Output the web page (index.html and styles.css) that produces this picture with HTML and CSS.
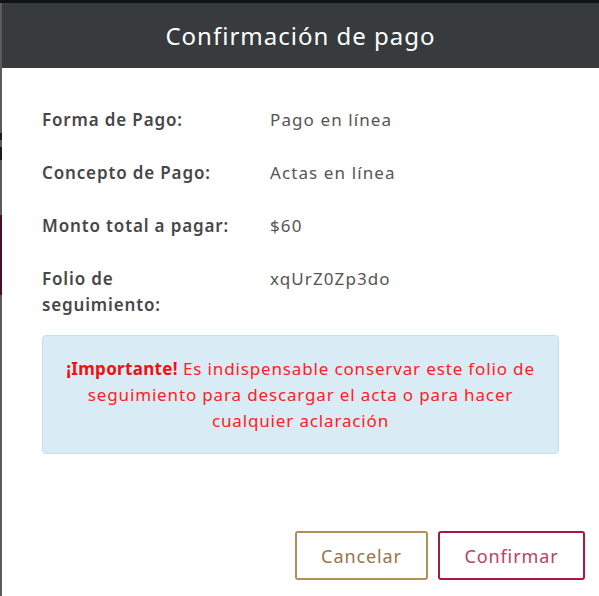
FILE: index.html
```html
<!DOCTYPE html>
<html lang="es">
<head>
<meta charset="utf-8">
<title>Confirmación de pago</title>
<link rel="stylesheet" href="styles.css">
</head>
<body>
<div class="topbar"></div>
<div class="page">
  <div class="modal">
    <div class="modal-header">
      <h2 class="modal-title">Confirmación de pago</h2>
    </div>
    <div class="modal-body">
      <div class="row">
        <div class="label">Forma de Pago:</div>
        <div class="value">Pago en línea</div>
      </div>
      <div class="row">
        <div class="label">Concepto de Pago:</div>
        <div class="value">Actas en línea</div>
      </div>
      <div class="row">
        <div class="label">Monto total a pagar:</div>
        <div class="value">$60</div>
      </div>
      <div class="row row-last">
        <div class="label">Folio de<br>seguimiento:</div>
        <div class="value">xqUrZ0Zp3do</div>
      </div>
      <div class="alert">
        <strong>¡Importante!</strong> Es indispensable conservar este folio de seguimiento para descargar el acta o para hacer cualquier aclaración
      </div>
    </div>
    <div class="modal-footer">
      <button class="btn btn-cancel">Cancelar</button>
      <button class="btn btn-confirm">Confirmar</button>
    </div>
  </div>
</div>
</body>
</html>
```
FILE: styles.css
```css
html, body {
  margin: 0;
  padding: 0;
}
body {
  width: 599px;
  height: 596px;
  overflow: hidden;
  background: linear-gradient(to bottom, #5b5b5b 0, #5b5b5b 133px, #1c1c1c 133px, #1c1c1c 140px, #5b5b5b 140px, #5b5b5b 147px, #1c1c1c 147px, #1c1c1c 160px, #5b5b5b 160px, #5b5b5b 215px, #4a0f24 215px, #4a0f24 295px, #5b5b5b 295px);
  font-family: "Noto Sans", "Open Sans", sans-serif;
}
.topbar {
  height: 3px;
  background: #0c1514;
}
.page {
  padding-left: 2px;
}
.modal {
  background: #ffffff;
  height: 593px;
  display: flex;
  flex-direction: column;
}
.modal-header {
  background: #373b3e;
  height: 65px;
  display: flex;
  align-items: center;
  justify-content: center;
}
.modal-title {
  margin: 0;
  color: #ffffff;
  font-size: 24px;
  font-weight: 400;
  letter-spacing: 1px;
}
.modal-body {
  padding: 39px 40px 0 40px;
}
.row {
  display: flex;
  font-size: 17px;
  line-height: 26px;
  margin-bottom: 27px;
}
.row-last {
  margin-bottom: 17px;
}
.label {
  width: 228px;
  flex: none;
  font-weight: 600;
  color: #474747;
  letter-spacing: 0.85px;
}
.value {
  color: #555555;
  font-weight: 400;
  letter-spacing: 1.1px;
}
.alert {
  background: #d9ecf5;
  border: 1px solid #bde3ee;
  border-radius: 4px;
  padding: 20px 18px 19px;
  text-align: center;
  color: #ff2020;
  font-size: 17px;
  line-height: 26px;
  letter-spacing: 0.85px;
}
.alert strong {
  font-weight: 700;
  color: #f01010;
  letter-spacing: 0.3px;
}
.modal-footer {
  display: flex;
  justify-content: flex-end;
  gap: 10px;
  padding: 77px 14px 0 0;
}
.btn {
  height: 49px;
  background: #ffffff;
  border: 2px solid;
  border-radius: 3px;
  font-family: inherit;
  font-size: 18px;
  letter-spacing: 0.9px;
  padding: 0;
  cursor: pointer;
}
.btn-cancel {
  border-color: #b38f5a;
  color: #957648;
  width: 133px;
}
.btn-confirm {
  border-color: #a31a43;
  color: #b8416a;
  width: 147px;
}
```
